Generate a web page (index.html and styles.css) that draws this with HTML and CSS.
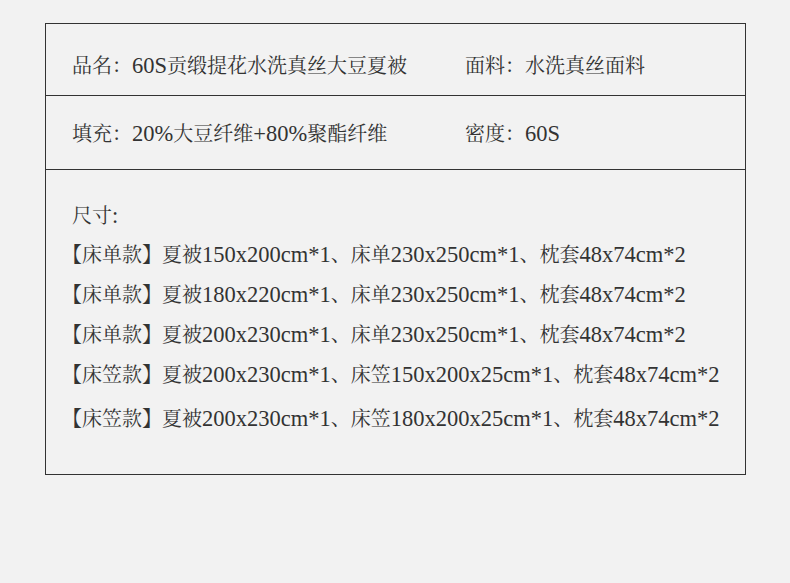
FILE: index.html
```html
<!DOCTYPE html>
<html lang="zh-CN">
<head>
    <meta charset="UTF-8">
    <meta name="viewport" content="width=device-width, initial-scale=1.0">
    <title>产品参数</title>
    <link rel="stylesheet" href="styles.css">
</head>
<body>
    <div class="spec-table">
        <div class="spec-row row-first">
            <div class="spec-cell">品名：<span class="en">60S</span>贡缎提花水洗真丝大豆夏被</div>
            <div class="spec-cell">面料：水洗真丝面料</div>
        </div>
        <div class="spec-row row-second">
            <div class="spec-cell">填充：<span class="en">20%</span>大豆纤维<span class="en">+80%</span>聚酯纤维</div>
            <div class="spec-cell">密度：<span class="en">60S</span></div>
        </div>
        <div class="size-block">
            <p class="size-title">尺寸<span class="en">:</span></p>
            <p class="size-line"><span class="br-open">【</span>床单款】夏被<span class="en">150x200cm*1</span>、床单<span class="en">230x250cm*1</span>、枕套<span class="en">48x74cm*2</span></p>
            <p class="size-line"><span class="br-open">【</span>床单款】夏被<span class="en">180x220cm*1</span>、床单<span class="en">230x250cm*1</span>、枕套<span class="en">48x74cm*2</span></p>
            <p class="size-line"><span class="br-open">【</span>床单款】夏被<span class="en">200x230cm*1</span>、床单<span class="en">230x250cm*1</span>、枕套<span class="en">48x74cm*2</span></p>
            <p class="size-line"><span class="br-open">【</span>床笠款】夏被<span class="en">200x230cm*1</span>、床笠<span class="en">150x200x25cm*1</span>、枕套<span class="en">48x74cm*2</span></p>
            <p class="size-line last"><span class="br-open">【</span>床笠款】夏被<span class="en">200x230cm*1</span>、床笠<span class="en">180x200x25cm*1</span>、枕套<span class="en">48x74cm*2</span></p>
        </div>
    </div>
</body>
</html>
```

FILE: styles.css
```css
body {
    margin: 0;
    padding: 0;
    background-color: #F2F2F2;
    color: #333333;
    font-family: "Liberation Serif", "Noto Serif CJK SC", "Noto Sans CJK SC", serif;
    font-size: 20px;
}

.en {
    font-size: 22.5px;
}

.spec-table {
    width: 699px;
    margin: 23px 0 0 45px;
    border: 1px solid #333333;
}

.spec-row {
    display: grid;
    grid-template-columns: 393px 1fr;
    padding-left: 26px;
    line-height: 30px;
    border-bottom: 1px solid #333333;
    box-sizing: border-box;
}

.row-first {
    height: 72px;
    padding-top: 27px;
}

.row-second {
    height: 74px;
    padding-top: 23px;
}

.size-block {
    padding: 27px 0 35px 26px;
}

.size-block p {
    margin: 0;
    line-height: 40px;
    white-space: nowrap;
}

.size-block .size-title {
    line-height: 38px;
}

.size-line.last {
    margin-top: 4px;
}

.br-open {
    font-feature-settings: "halt";
}
```
